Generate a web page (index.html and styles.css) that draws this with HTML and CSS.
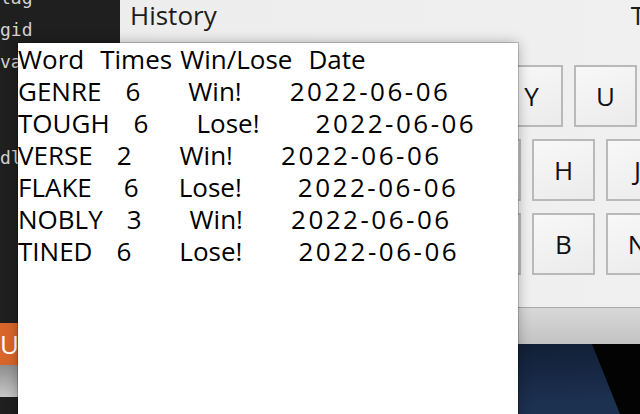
FILE: index.html
```html
<!DOCTYPE html>
<html>
<head>
<meta charset="utf-8">
<title>History</title>
<link rel="stylesheet" href="styles.css">
</head>
<body>
<div class="desktop">
  <div class="terminal">
    <pre class="term-text">lag
gid
va


dl</pre>
    <div class="term-button">UT</div>
    <div class="term-bar"></div>
  </div>

  <div class="app-window">
    <div class="app-header"><span>History</span><span>Tries</span></div>
    <div class="keyboard">
      <div class="key-row row-top">
        <div class="key">Q</div><div class="key">W</div><div class="key">E</div><div class="key">R</div><div class="key">T</div><div class="key">Y</div><div class="key">U</div><div class="key">I</div><div class="key">O</div><div class="key">P</div>
      </div>
      <div class="key-row row-mid">
        <div class="key">A</div><div class="key">S</div><div class="key">D</div><div class="key">F</div><div class="key">G</div><div class="key">H</div><div class="key">J</div><div class="key">K</div><div class="key">L</div>
      </div>
      <div class="key-row row-bot">
        <div class="key">Z</div><div class="key">X</div><div class="key">C</div><div class="key">V</div><div class="key">B</div><div class="key">N</div><div class="key">M</div>
      </div>
    </div>
  </div>

  <div class="shelf"></div>

  <div class="wallpaper">
    <svg width="520" height="70" viewBox="0 0 520 70" preserveAspectRatio="none">
      <defs>
        <linearGradient id="navy" x1="0" y1="0" x2="0.3" y2="1">
          <stop offset="0" stop-color="#0f1a2f"/>
          <stop offset="1" stop-color="#1c3050"/>
        </linearGradient>
      </defs>
      <rect x="0" y="0" width="520" height="70" fill="url(#navy)"/>
      <polygon points="472,0 520,0 520,70 500,70" fill="#030303"/>
    </svg>
  </div>

  <div class="history-popup">
    <div class="history-line">Word  Times Win/Lose  Date</div>
    <div class="history-line">GENRE   6      Win!      <span class="date">2022-06-06</span></div>
    <div class="history-line">TOUGH   6      Lose!       <span class="date">2022-06-06</span></div>
    <div class="history-line">VERSE   2      Win!      <span class="date">2022-06-06</span></div>
    <div class="history-line">FLAKE    6     Lose!       <span class="date">2022-06-06</span></div>
    <div class="history-line">NOBLY   3      Win!      <span class="date">2022-06-06</span></div>
    <div class="history-line">TINED   6      Lose!       <span class="date">2022-06-06</span></div>
  </div>
</div>
</body>
</html>
```
FILE: styles.css
```css
html, body {
  margin: 0;
  padding: 0;
  background: #1e1e1e;
}

.desktop {
  position: relative;
  width: 640px;
  height: 414px;
  overflow: hidden;
  background: #1e1e1e;
  font-family: "Open Sans", "DejaVu Sans", sans-serif;
}

/* terminal window on the left */
.terminal {
  position: absolute;
  left: 0;
  top: 0;
  width: 120px;
  height: 414px;
  background: #1f1f1f;
  overflow: hidden;
}

.term-text {
  margin: -18px 0 0 0;
  font-family: "DejaVu Sans Mono", "Liberation Mono", monospace;
  font-size: 18px;
  line-height: 32px;
  color: #d2d2d2;
}

.term-button {
  position: absolute;
  left: 0;
  top: 323px;
  width: 120px;
  height: 42px;
  background: #d8662b;
  color: #ffffff;
  font-size: 26px;
  line-height: 42px;
  padding-left: 0;
  letter-spacing: 1px;
}

.term-bar {
  position: absolute;
  left: 0;
  top: 365px;
  width: 120px;
  height: 32px;
  background: linear-gradient(#8e8e8e, #c7c7c7);
}

/* main application window */
.app-window {
  position: absolute;
  left: 120px;
  top: 0;
  width: 540px;
  height: 307px;
  background: linear-gradient(90deg, #ededed, #f0f0f0);
  border-bottom: 1px solid #a8a8a8;
  overflow: hidden;
}

.app-header {
  display: flex;
  gap: 414px;
  padding-left: 10px;
  font-size: 26px;
  line-height: 30px;
  color: #1c1c1c;
  white-space: nowrap;
}

.keyboard {
  margin-top: 35px;
  display: flex;
  flex-direction: column;
  gap: 12px;
}

.key-row {
  display: flex;
  gap: 11px;
}

.row-top { padding-left: 10px; }
.row-mid { padding-left: 42px; }
.row-bot { padding-left: 116px; }

.key {
  flex: 0 0 auto;
  box-sizing: border-box;
  width: 63px;
  height: 62px;
  border: 2px solid #b9b9b9;
  background: linear-gradient(160deg, #f8f8f8, #ebebeb);
  display: flex;
  align-items: center;
  justify-content: center;
  font-size: 26px;
  color: #111111;
}

.shelf {
  position: absolute;
  left: 120px;
  top: 308px;
  width: 520px;
  height: 36px;
  background: linear-gradient(#d8d8d8, #c3c3c3);
}

.wallpaper {
  position: absolute;
  left: 120px;
  top: 344px;
  width: 520px;
  height: 70px;
}

.wallpaper svg {
  display: block;
}

/* history popup */
.history-popup {
  position: absolute;
  left: 18px;
  top: 43px;
  width: 500px;
  height: 380px;
  background: #ffffff;
  box-shadow: 0 0 0 1px rgba(0, 0, 0, 0.18), 0 0 12px rgba(0, 0, 0, 0.3);
  font-size: 26px;
  line-height: 32px;
  color: #000000;
}

.history-line {
  white-space: pre;
  word-spacing: 1.25px;
}

.date {
  letter-spacing: 2.5px;
}
```
